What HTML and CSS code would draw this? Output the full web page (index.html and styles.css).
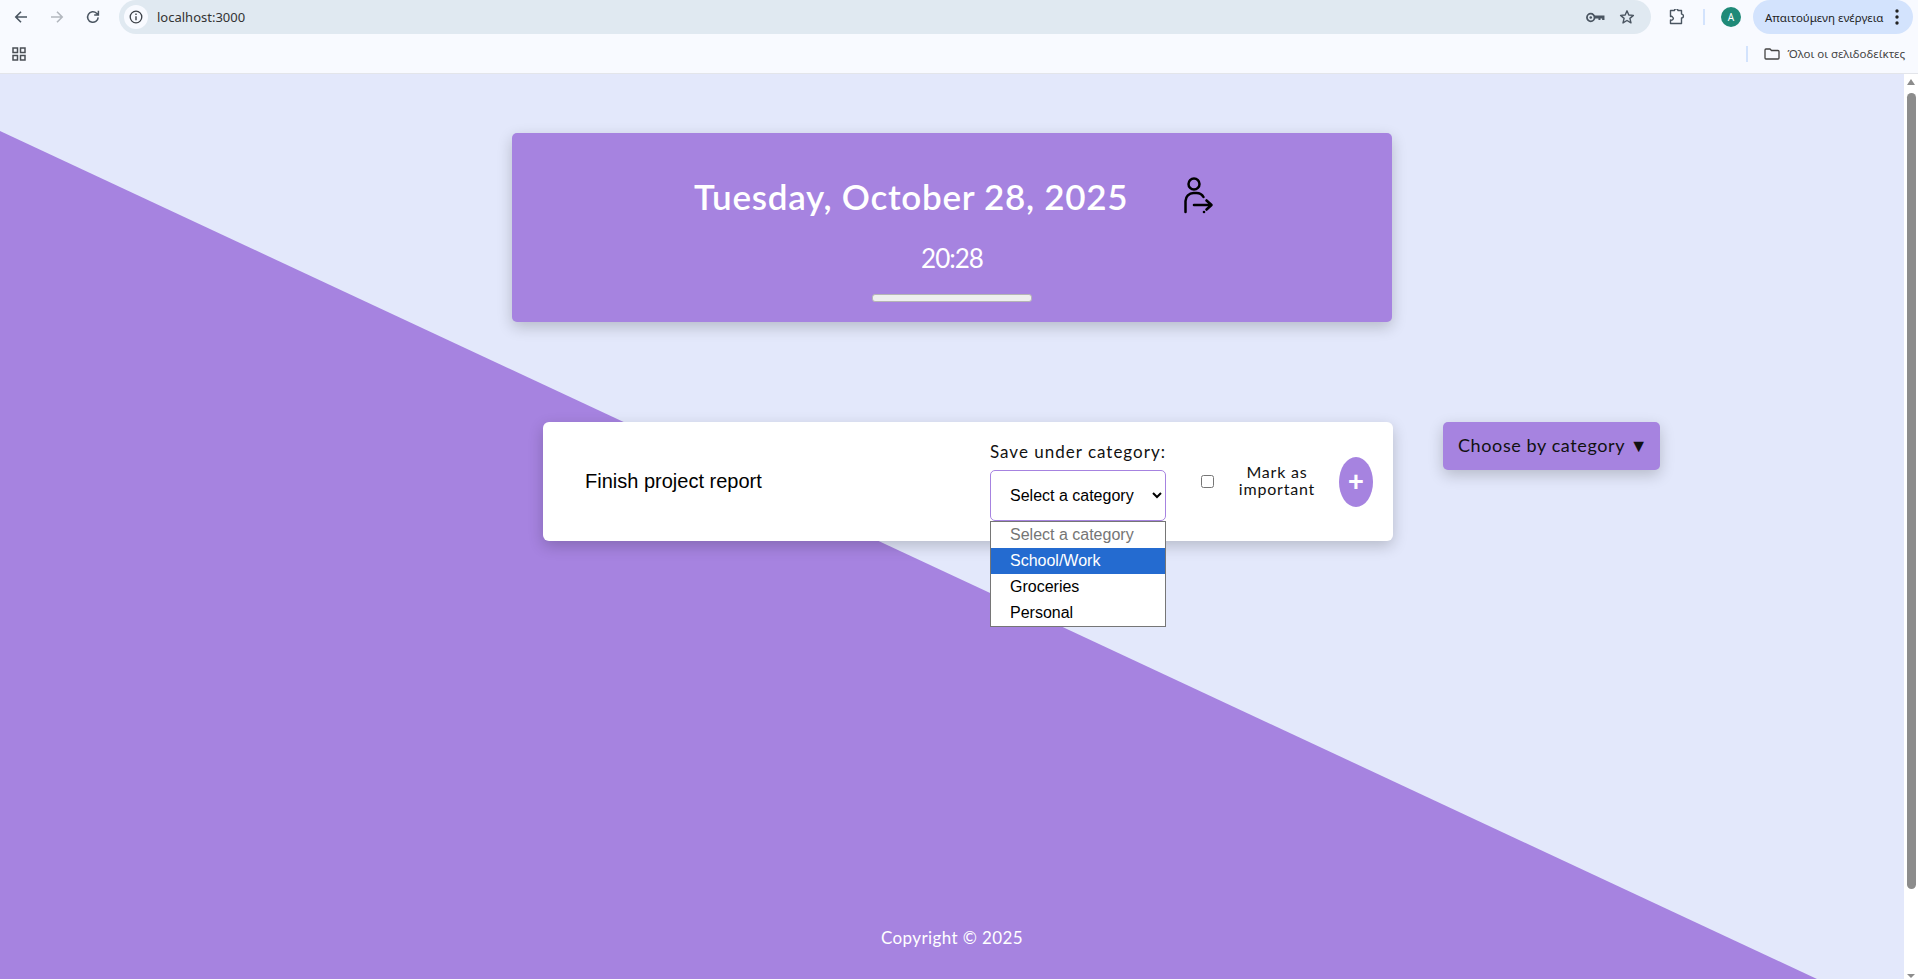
FILE: index.html
```html
<!DOCTYPE html>
<html>
	<head>
		<meta charset="utf-8">
		<title>localhost:3000</title>
		<link rel="stylesheet" href="styles.css">
	</head>
	<body>
		<header class="browser">
			<div class="nav-row">
				<div class="nav-btn">
					<svg width="16" height="16" viewBox="0 0 16 16"><path d="M14 8H3M8 2.8 2.8 8 8 13.2" fill="none" stroke="#4a5561" stroke-width="1.6"/></svg>
				</div>
				<div class="nav-btn">
					<svg width="16" height="16" viewBox="0 0 16 16"><path d="M2 8h11M8 2.8 13.2 8 8 13.2" fill="none" stroke="#b3b8bf" stroke-width="1.6"/></svg>
				</div>
				<div class="nav-btn">
					<svg width="16" height="16" viewBox="0 0 16 16"><path d="M13.2 8.4A5.3 5.3 0 1 1 11.6 4.2L13.4 6M13.4 1.8V6H9.2" fill="none" stroke="#4a5561" stroke-width="1.5"/></svg>
				</div>
				<div class="omnibox">
					<span class="site-info">
						<svg width="14" height="14" viewBox="0 0 14 14"><circle cx="7" cy="7" r="5.8" fill="none" stroke="#3c4148" stroke-width="1.3"/><path d="M7 6.2v4M7 3.6v1.4" stroke="#3c4148" stroke-width="1.4"/></svg>
					</span>
					<span class="url">localhost:3000</span>
					<span class="omni-icons">
						<svg width="19" height="13" viewBox="0 0 18 12"><circle cx="4.5" cy="6" r="3.6" fill="none" stroke="#4a5561" stroke-width="1.7"/><circle cx="4.5" cy="6" r="1.2" fill="#4a5561"/><path d="M8 4h9.500v4.400h-2.200v-1.500h-1.600v1.500h-1.900v-1.500H8z" fill="#4a5561"/></svg>
						<svg width="16" height="16" viewBox="0 0 16 16"><path d="M8 1.8 9.800 6l4.600.4-3.500 3 1.100 4.500L8 11.500l-4 2.400 1.100-4.500-3.500-3L6.200 6z" fill="none" stroke="#4a5561" stroke-width="1.4" stroke-linejoin="round"/></svg>
					</span>
				</div>
				<div class="ext-icon">
					<svg width="17" height="16" viewBox="0 0 17 16"><path d="M1.500 1.500h4a1.700 1.700 0 0 1 3.400 0h3.600v3.600a1.700 1.700 0 0 1 0 3.800v5.600H1.500v-3.600a1.700 1.700 0 0 0 2-2.900 1.700 1.700 0 0 0-2 -0.500z" fill="none" stroke="#4a5561" stroke-width="1.4" stroke-linejoin="round"/></svg>
				</div>
				<span class="divider"></span>
				<span class="avatar">A</span>
				<div class="action-pill">
					<span>Απαιτούμενη ενέργεια</span>
					<svg width="4" height="16" viewBox="0 0 4 16"><circle cx="2" cy="2" r="1.700" fill="#222"/><circle cx="2" cy="8" r="1.700" fill="#222"/><circle cx="2" cy="14" r="1.700" fill="#222"/></svg>
				</div>
			</div>
			<div class="bookmarks-row">
				<svg class="apps" width="14" height="14" viewBox="0 0 14 14"><path d="M1 1h4.500v4.500H1zM8.500 1H13v4.500H8.500zM1 8.500h4.500V13H1zM8.500 8.500H13V13H8.500z" fill="none" stroke="#4a4f55" stroke-width="1.500"/></svg>
				<span class="divider"></span>
				<svg class="folder" width="16" height="12" viewBox="0 0 16 12"><path d="M1 2a1 1 0 0 1 1-1h4l1.500 1.500H14a1 1 0 0 1 1 1V10a1 1 0 0 1-1 1H2a1 1 0 0 1-1-1z" fill="none" stroke="#444" stroke-width="1.300"/></svg>
				<span class="all-bookmarks">Όλοι οι σελιδοδείκτες</span>
			</div>
		</header>

		<div class="viewport">
			<main class="page">
				<div class="page-bg"></div>

				<section class="hero">
					<div class="hero-top">
						<h1 class="date">Tuesday, October 28, 2025</h1>
						<svg class="logout" width="30" height="37" viewBox="0 0 30 37">
							<circle cx="10" cy="7" r="5.500" fill="none" stroke="#000" stroke-width="2.500"/>
							<path d="M1.500 35V24a8 8 0 0 1 8-8h3a8 8 0 0 1 7 4" fill="none" stroke="#000" stroke-width="2.500" stroke-linecap="round"/>
							<path d="M10 28h17M22.500 23.500 27.500 28 22.500 32.500" fill="none" stroke="#000" stroke-width="2.600" stroke-linecap="round" stroke-linejoin="round"/>
							<circle cx="20" cy="35" r="1.300"/>
						</svg>
					</div>
					<div class="time">20:28</div>
					<div class="hero-bar"></div>
				</section>

				<div class="task-row">
					<form class="task-card">
						<input class="task-input" type="text" value="Finish project report">
						<div class="category-group">
							<label class="category-label">Save under category:</label>
							<div class="select-wrap">
								<select class="category-select">
									<option>Select a category</option>
								</select>
								<ul class="select-menu">
									<li class="muted">Select a category</li>
									<li class="active">School/Work</li>
									<li>Groceries</li>
									<li>Personal</li>
								</ul>
							</div>
						</div>
						<input class="important-check" type="checkbox">
						<span class="important-label">Mark as important</span>
						<button class="add-btn" type="button">+</button>
					</form>
					<button class="filter-btn" type="button">Choose by category ▼</button>
				</div>

				<footer class="copyright">Copyright © 2025</footer>
			</main>
			<div class="scrollbar">
				<span class="arrow-up"></span>
				<span class="thumb"></span>
				<span class="arrow-down"></span>
			</div>
		</div>
	</body>
</html>
```

FILE: styles.css
```css
* {
	box-sizing: border-box;
}

html,
body {
	height: 100%;
	margin: 0;
	padding: 0;
	overflow: hidden;
}

body {
	display: flex;
	flex-direction: column;
	font-family: "Lato", "Noto Sans", sans-serif;
}

/* browser chrome */
.browser {
	background: #f8faff;
	border-bottom: 1px solid #e3e5ea;
	height: 74px;
	flex-shrink: 0;
}

.nav-row {
	display: flex;
	align-items: center;
	height: 34px;
	padding-left: 3px;
	padding-right: 5px;
}

.nav-btn {
	width: 36px;
	display: flex;
	justify-content: center;
	align-items: center;
}

.omnibox {
	flex: 1;
	height: 34px;
	margin-left: 8px;
	padding-left: 5px;
	padding-right: 16px;
	background: #e0e9f1;
	border-radius: 17px;
	display: flex;
	align-items: center;
}

.site-info {
	width: 24px;
	height: 24px;
	border-radius: 50%;
	background: #f8faff;
	display: flex;
	align-items: center;
	justify-content: center;
}

.url {
	margin-left: 9px;
	font: 13px "Noto Sans", sans-serif;
	color: #333;
	flex: 1;
}

.omni-icons {
	display: flex;
	align-items: center;
	gap: 14px;
}

.ext-icon {
	width: 52px;
	display: flex;
	justify-content: center;
}

.divider {
	width: 2px;
	height: 16px;
	background: #d3e3fd;
}

.avatar {
	width: 20px;
	height: 20px;
	margin-left: 16px;
	border-radius: 50%;
	background: #1f8a78;
	color: #fff;
	font: 10px/20px "Noto Sans", sans-serif;
	text-align: center;
}

.action-pill {
	width: 160px;
	height: 34px;
	margin-left: 12px;
	padding: 0 14px 0 12px;
	border-radius: 17px;
	background: #d3e3fd;
	display: flex;
	align-items: center;
	justify-content: space-between;
	font: 11.500px "Noto Sans", sans-serif;
	color: #1f1f1f;
}

.bookmarks-row {
	display: flex;
	align-items: center;
	height: 39px;
	padding-left: 12px;
	padding-right: 13px;
}

.apps {
	margin-right: auto;
}

.folder {
	margin-left: 16px;
}

.all-bookmarks {
	margin-left: 7px;
	font: 11.500px "Noto Sans", sans-serif;
	color: #444;
}

/* page */
.viewport {
	flex: 1;
	display: flex;
	min-height: 0;
}

.page {
	flex: 1;
	position: relative;
	display: flex;
	flex-direction: column;
	background: #e3e8fb;
	overflow: hidden;
}

.page-bg {
	position: absolute;
	top: 0;
	left: 0;
	right: 0;
	bottom: 0;
	background: #a683e0;
	clip-path: polygon(0 57px, 1817px 905px, 0 905px);
}

.hero {
	position: relative;
	width: 880px;
	height: 189px;
	margin: 59px auto 0;
	padding-top: 41px;
	background: #a683e0;
	border-radius: 5px;
	box-shadow: 0 5px 15px rgba(0, 0, 0, 0.2);
	color: #fff;
	display: flex;
	flex-direction: column;
	align-items: center;
}

.hero-top {
	display: flex;
	align-items: center;
	gap: 56px;
	height: 44px;
	margin-left: 4px;
}

.date {
	margin: 0;
	width: 434px;
	font-size: 35px;
	font-weight: 600;
	letter-spacing: 0.700px;
	white-space: nowrap;
}

.logout {
	margin-top: -2px;
}

.time {
	margin-top: 23px;
	font-size: 26px;
	line-height: 34px;
	letter-spacing: -1px;
}

.hero-bar {
	width: 160px;
	height: 8px;
	margin-top: 19px;
	background: #eee;
	border: 1px solid #b5b5b5;
	border-radius: 3px;
}

.task-row {
	position: relative;
	display: flex;
	align-items: flex-start;
	gap: 50px;
	margin-top: 100px;
	padding-left: 543px;
}

.task-card {
	width: 850px;
	height: 119px;
	padding-left: 42px;
	padding-right: 20px;
	background: #fff;
	border-radius: 6px;
	box-shadow: 0 5px 15px rgba(0, 0, 0, 0.2);
	display: flex;
	align-items: center;
}

.task-input {
	width: 405px;
	padding: 0;
	border: none;
	outline: none;
	font: 20px "Liberation Sans", Arial, sans-serif;
	color: #000;
}

.category-group {
	width: 176px;
}

.category-label {
	display: block;
	font-size: 17px;
	line-height: 20px;
	letter-spacing: 1px;
	white-space: nowrap;
	margin-bottom: 8px;
	color: #111;
}

.select-wrap {
	position: relative;
}

.category-select {
	display: block;
	width: 176px;
	height: 51px;
	padding-left: 15px;
	background: #fff;
	border: 1px solid #a683e0;
	border-radius: 5px;
	font: 16px "Liberation Sans", Arial, sans-serif;
	color: #000;
}

.select-menu {
	position: absolute;
	top: 51px;
	left: 0;
	width: 176px;
	margin: 0;
	padding: 0;
	list-style: none;
	background: #fff;
	border: 1px solid #767676;
	font: 16px/26px "Liberation Sans", Arial, sans-serif;
	z-index: 5;
}

.select-menu li {
	height: 26px;
	padding-left: 19px;
	color: #000;
}

.select-menu .muted {
	color: #757575;
}

.select-menu .active {
	background: #246bd0;
	color: #fff;
}

.important-check {
	width: 13px;
	height: 13px;
	margin: 0 0 0 35px;
}

.important-label {
	width: 80px;
	margin-left: 23px;
	margin-bottom: 4px;
	font-size: 16px;
	line-height: 17px;
	letter-spacing: 0.800px;
	text-align: center;
	color: #111;
}

.add-btn {
	width: 34px;
	height: 50px;
	margin-left: 22px;
	padding: 0;
	border: none;
	border-radius: 50%;
	background: #a683e0;
	color: #fff;
	font: 700 27px/50px "Liberation Sans", Arial, sans-serif;
}

.filter-btn {
	width: 217px;
	height: 48px;
	padding: 0 0 2px 15px;
	border: none;
	border-radius: 5px;
	background: #a683e0;
	box-shadow: 0 5px 15px rgba(0, 0, 0, 0.2);
	font-family: "Lato", "Noto Sans", sans-serif;
	font-size: 18px;
	letter-spacing: 0.600px;
	color: #111;
	text-align: left;
	white-space: nowrap;
}

.copyright {
	position: relative;
	margin-top: auto;
	padding-bottom: 30px;
	text-align: center;
	font-size: 17px;
	line-height: 22px;
	letter-spacing: 0.400px;
	color: #fff;
}

/* scrollbar */
.scrollbar {
	width: 14px;
	background: #fff;
	position: relative;
	display: flex;
	flex-direction: column;
	align-items: center;
}

.arrow-up {
	margin-top: 5px;
	border-left: 4px solid transparent;
	border-right: 4px solid transparent;
	border-bottom: 6px solid #8c8c8c;
}

.thumb {
	width: 9px;
	height: 796px;
	margin-top: 8px;
	border-radius: 5px;
	background: #8c8c8c;
}

.arrow-down {
	margin-top: auto;
	margin-bottom: 1px;
	border-left: 4px solid transparent;
	border-right: 4px solid transparent;
	border-top: 4px solid #8c8c8c;
}
```
